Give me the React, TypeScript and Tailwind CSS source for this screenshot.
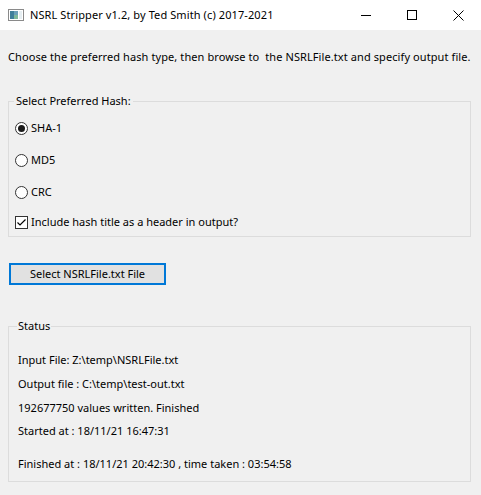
import React from "react";

const font = { fontFamily: '"Noto Sans", "Liberation Sans", sans-serif' };

function AppIcon() {
  return (
    <svg width="16" height="14" viewBox="0 0 16 14" className="shrink-0">
      <rect x="0.5" y="1.5" width="15" height="11" fill="#ffffff" stroke="#8a8a8a" />
      <rect x="2" y="3" width="8" height="8" fill="#6aa0b8" />
      <rect x="2" y="3" width="4" height="8" fill="#3f7f9a" />
      <rect x="6" y="7" width="4" height="4" fill="#7fb89a" />
      <rect x="11" y="3" width="3" height="8" fill="#e6eef2" />
    </svg>
  );
}

function Radio({ checked, label }: { checked?: boolean; label: string }) {
  return (
    <div className="flex items-center gap-[3px]">
      <span className="w-[13px] h-[13px] rounded-full border border-[#333333] bg-white flex items-center justify-center">
        {checked && <span className="w-[7px] h-[7px] rounded-full bg-[#1a1a1a]" />}
      </span>
      <span>{label}</span>
    </div>
  );
}

export default function App() {
  return (
    <div className="w-[481px] h-[495px] bg-[#f0f0f0] text-[11px] text-black leading-[16px]" style={font}>
      {/* title bar */}
      <div className="h-[30px] bg-white flex items-center">
        <div className="pl-[8px] pr-[6px] flex items-center">
          <AppIcon />
        </div>
        <span className="flex-1 text-[11px] tracking-[0.1px]">NSRL Stripper v1.2, by Ted Smith (c) 2017-2021</span>
        <div className="flex h-full">
          <div className="w-[46px] flex items-center justify-center">
            <svg width="10" height="10" viewBox="0 0 10 10">
              <path d="M0 5.5H10" stroke="#000" strokeWidth="1" />
            </svg>
          </div>
          <div className="w-[46px] flex items-center justify-center">
            <svg width="10" height="10" viewBox="0 0 10 10">
              <rect x="0.5" y="0.5" width="9" height="9" fill="none" stroke="#000" strokeWidth="1" />
            </svg>
          </div>
          <div className="w-[46px] flex items-center justify-center">
            <svg width="11" height="11" viewBox="0 0 11 11">
              <path d="M0.5 0.5L10.5 10.5M10.5 0.5L0.5 10.5" stroke="#000" strokeWidth="1" />
            </svg>
          </div>
        </div>
      </div>

      <div className="px-[8px] pt-[19px]">
        <p className="whitespace-pre tracking-[0.09px]">Choose the preferred hash type, then browse to  the NSRLFile.txt and specify output file.</p>

        <fieldset className="mt-[28px] w-[463px] border border-[#dcdcdc] pl-[6px]">
          <legend className="-ml-[1px] px-[2px] leading-[16px]">Select Preferred Hash:</legend>
          <div className="pt-[3px]">
            <div className="h-[32px] flex items-center">
              <Radio checked label="SHA-1" />
            </div>
            <div className="h-[32px] flex items-center">
              <Radio label="MD5" />
            </div>
            <div className="h-[32px] flex items-center">
              <Radio label="CRC" />
            </div>
            <div className="h-[28px] flex items-center gap-[3px]">
              <span className="w-[13px] h-[13px] border border-[#333333] bg-white flex items-center justify-center">
                <svg width="11" height="11" viewBox="0 0 11 11">
                  <path d="M1.5 5.5L4 8L9.5 2.5" fill="none" stroke="#000" strokeWidth="1.2" />
                </svg>
              </span>
              <span>Include hash title as a header in output?</span>
            </div>
          </div>
        </fieldset>

        <button className="mt-[26px] ml-[1px] w-[157px] h-[22px] bg-[#e1e1e1] border-2 border-[#0078d7] flex items-center justify-center">
          Select NSRLFile.txt File
        </button>

        <fieldset className="mt-[33px] w-[463px] border border-[#dcdcdc] pl-[9px] pb-[9px]">
          <legend className="-ml-[1px] px-[1px] leading-[16px]">Status</legend>
          <div className="pt-[18px] flex flex-col">
            <p className="h-[24px]">Input File: Z:\temp\NSRLFile.txt</p>
            <p className="h-[24px]">Output file : C:\temp\test-out.txt</p>
            <p className="h-[23px]">192677750 values written. Finished</p>
            <p className="h-[33px]">Started at : 18/11/21 16:47:31</p>
            <p className="h-[16px]">Finished at : 18/11/21 20:42:30 , time taken : 03:54:58</p>
          </div>
        </fieldset>
      </div>
    </div>
  );
}
